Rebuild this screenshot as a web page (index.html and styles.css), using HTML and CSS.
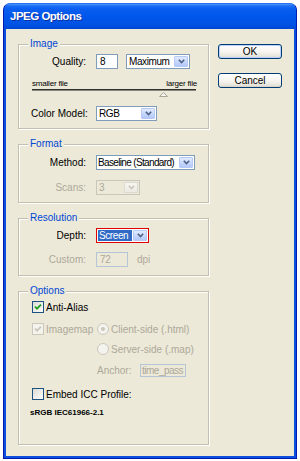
FILE: index.html
```html
<!DOCTYPE html>
<html>
<head>
<meta charset="utf-8">
<title>JPEG Options</title>
<link rel="stylesheet" href="styles.css">
</head>
<body>
<div class="window">
  <div class="titlebar"><span class="title">JPEG Options</span></div>
  <div class="client">
    <div class="groups">
      <section class="group g-image">
        <span class="legend">Image</span>
        <div class="row">
          <span class="lbl">Quality:</span>
          <div class="ctrls">
            <span class="field w-quality">8</span>
            <span class="select w-max"><span class="val">Maximum</span><span class="drop"><svg width="7" height="5" viewBox="0 0 7 5"><path d="M0.8 0.8 L3.5 3.6 L6.2 0.8" /></svg></span></span>
          </div>
        </div>
        <div class="slider">
          <div class="slider-labels"><span>smaller file</span><span>larger file</span></div>
          <div class="track"></div>
          <svg class="thumb" style="left:80%" width="9" height="5" viewBox="0 0 9 5"><path d="M0.5 4.5 L4.5 0.5 L8.5 4.5 Z" /></svg>
        </div>
        <div class="row">
          <span class="lbl">Color Model:</span>
          <div class="ctrls">
            <span class="select w-model"><span class="val">RGB</span><span class="drop"><svg width="7" height="5" viewBox="0 0 7 5"><path d="M0.8 0.8 L3.5 3.6 L6.2 0.8" /></svg></span></span>
          </div>
        </div>
      </section>

      <section class="group g-format">
        <span class="legend">Format</span>
        <div class="row">
          <span class="lbl">Method:</span>
          <div class="ctrls">
            <span class="select w-method"><span class="val tight">Baseline (Standard)</span><span class="drop"><svg width="7" height="5" viewBox="0 0 7 5"><path d="M0.8 0.8 L3.5 3.6 L6.2 0.8" /></svg></span></span>
          </div>
        </div>
        <div class="row row-gap">
          <span class="lbl dis">Scans:</span>
          <div class="ctrls">
            <span class="select disabled w-scans"><span class="val">3</span><span class="drop"><svg width="7" height="5" viewBox="0 0 7 5"><path d="M0.8 0.8 L3.5 3.6 L6.2 0.8" /></svg></span></span>
          </div>
        </div>
      </section>

      <section class="group g-res">
        <span class="legend">Resolution</span>
        <div class="row">
          <span class="lbl">Depth:</span>
          <div class="ctrls">
            <span class="select focused w-depth"><span class="val">Screen</span><span class="drop"><svg width="7" height="5" viewBox="0 0 7 5"><path d="M0.8 0.8 L3.5 3.6 L6.2 0.8" /></svg></span></span>
          </div>
        </div>
        <div class="row row-gap2">
          <span class="lbl dis">Custom:</span>
          <div class="ctrls">
            <span class="field disabled w-custom">72</span>
            <span class="dis">dpi</span>
          </div>
        </div>
      </section>

      <section class="group g-opt">
        <span class="legend">Options</span>
        <div class="orow o-aa">
          <span class="cb"><svg width="10" height="10" viewBox="0 0 10 10"><path class="chk" d="M2 4.6 L4 6.6 L8 2.6" /></svg></span>
          <span class="cbl">Anti-Alias</span>
        </div>
        <div class="orow o-map">
          <div class="ocol">
            <span class="cb disabled"><svg width="10" height="10" viewBox="0 0 10 10"><path class="chk" d="M2 4.6 L4 6.6 L8 2.6" /></svg></span>
            <span class="cbl dis">Imagemap</span>
          </div>
          <span class="rb disabled"><span class="dot"></span></span>
          <span class="rbl dis">Client-side (.html)</span>
        </div>
        <div class="orow o-srv">
          <div class="ocol"></div>
          <span class="rb disabled"></span>
          <span class="rbl dis">Server-side (.map)</span>
        </div>
        <div class="orow o-anchor">
          <div class="ocol"></div>
          <span class="dis anchor-lbl">Anchor:</span>
          <span class="field disabled w-anchor">time_pass</span>
        </div>
        <div class="orow o-icc">
          <span class="cb"></span>
          <span class="cbl">Embed ICC Profile:</span>
        </div>
        <div class="profile">sRGB IEC61966-2.1</div>
      </section>
    </div>

    <div class="buttons">
      <button class="btn default">OK</button>
      <button class="btn">Cancel</button>
    </div>
  </div>
</div>
</body>
</html>
```

FILE: styles.css
```css
html, body {
  margin: 0;
  padding: 0;
  background: #ffffff;
}

body {
  font-family: "Liberation Sans", Arial, sans-serif;
  font-size: 10px;
  color: #000;
}

.window {
  margin: 3px 0 0 3px;
  width: 294px;
  height: 456px;
  box-sizing: border-box;
  display: flex;
  flex-direction: column;
  background: #0b4fdc;
  border: 1px solid #0019b0;
  border-top: 1px solid #2a6ff0;
  border-radius: 7px 7px 0 0;
  padding: 0 2px 2px 2px;
}

.titlebar {
  margin: 0 -2px;
  height: 25px;
  border-radius: 6px 6px 0 0;
  background: linear-gradient(#4a98fb 0px, #1a6cf4 2px, #0a5ef0 5px, #0057eb 12px, #0054e6 18px, #0050e0 22px, #0046cf 25px);
  padding-left: 6px;
  display: flex;
  align-items: center;
}

.title {
  font-family: "Liberation Sans", Arial, sans-serif;
  font-weight: bold;
  font-size: 11.5px;
  letter-spacing: -0.5px;
  color: #fff;
  text-shadow: 1px 1px 0 #0a2fa0;
  line-height: 25px;
}

.client {
  flex: 1;
  background: #ece9d8;
  display: flex;
  align-items: flex-start;
  padding: 15px 0 0 12px;
  gap: 9px;
}

.groups {
  width: 191px;
  display: flex;
  flex-direction: column;
  gap: 15px;
}

.group {
  position: relative;
  border: 1px solid #c3bfae;
  box-shadow: inset 1px 1px 0 #fff, 1px 1px 0 #fff;
  padding: 0 12px;
}

.legend {
  position: absolute;
  top: -7px;
  left: 9px;
  padding: 0 2px;
  background: #ece9d8;
  color: #0046d5;
  line-height: 12px;
}

.g-image { padding-top: 9px; padding-bottom: 7px; }
.g-format { padding-top: 10px; padding-bottom: 7px; }
.g-res { padding-top: 9px; padding-bottom: 8px; }
.g-opt { padding-top: 9px; padding-bottom: 26px; }

.row {
  display: grid;
  grid-template-columns: 55px auto;
  column-gap: 10px;
  align-items: center;
  height: 15px;
}

.row-gap { margin-top: 10px; }
.row-gap2 { margin-top: 9px; }

.lbl {
  text-align: right;
  white-space: nowrap;
}

.dis { color: #aca899; }

.ctrls {
  display: flex;
  align-items: center;
  gap: 8px;
}

.w-custom + .dis { margin-left: 1px; }

.field {
  box-sizing: border-box;
  height: 15px;
  border: 1px solid #7f9db9;
  background: #fff;
  padding: 0 3px;
  line-height: 13px;
  white-space: nowrap;
  overflow: hidden;
  letter-spacing: -0.3px;
}

.field.disabled {
  border-color: #b5c5d6;
  background: #ece9d8;
  color: #aca899;
}

.w-quality { width: 22px; }
.w-custom { width: 32px; }
.w-anchor { width: 46px; height: 13px; line-height: 11px; padding: 0 1px; letter-spacing: -0.5px; }

.select {
  box-sizing: border-box;
  display: flex;
  height: 15px;
  border: 1px solid #7f9db9;
  background: #fff;
}

.select .val {
  flex: 1;
  padding-left: 2px;
  line-height: 13px;
  white-space: nowrap;
  overflow: hidden;
  letter-spacing: -0.4px;
}

.select .val.tight {
  padding-left: 1px;
  letter-spacing: -0.65px;
}

.select .drop {
  width: 14px;
  margin: 1px;
  box-sizing: border-box;
  border: 1px solid #b6c8f5;
  border-radius: 1px;
  background: linear-gradient(#e2ebfe, #c4d5fb 60%, #b4c8f7);
  display: flex;
  align-items: center;
  justify-content: center;
  flex-shrink: 0;
}

.select .drop svg path {
  fill: none;
  stroke: #4d6185;
  stroke-width: 1.6;
}

.select.disabled {
  border-color: #c9c7ba;
  background: #ece9d8;
}

.select.disabled .val { color: #aca899; }

.select.disabled .drop {
  border-color: #dcdad0;
  background: linear-gradient(#f7f6f1, #ebe9e0);
}

.select.disabled .drop svg path { stroke: #c9c7ba; }

.select.focused {
  border: 1px solid #e00000;
}

.select.focused .val {
  background: #316ac5;
  color: #fff;
  margin: 1px 0 1px 1px;
  line-height: 11px;
  padding-left: 1px;
}

.w-max { width: 64px; }
.w-model { width: 61px; }
.w-method { width: 99px; }
.w-scans { width: 44px; }
.w-depth { width: 53px; }

.slider {
  position: relative;
  height: 17px;
  margin: 10px 0 10px 1px;
}

.slider-labels {
  display: flex;
  justify-content: space-between;
  font-size: 8px;
  letter-spacing: -0.2px;
  line-height: 10px;
  height: 10px;
  margin-right: -1px;
}

.track {
  height: 1px;
  background: #303030;
  border-bottom: 1px solid #8a8878;
}

.thumb {
  position: absolute;
  top: 13px;
  margin-left: -4px;
}

.thumb path {
  fill: #f4f3ee;
  stroke: #a8a698;
  stroke-width: 1;
}

.orow {
  display: flex;
  align-items: center;
  height: 12px;
}

.ocol {
  width: 65px;
  display: flex;
  align-items: center;
  flex-shrink: 0;
}

.o-aa { margin-left: 1px; }
.o-map { margin-top: 10px; margin-left: 1px; }
.o-srv { margin-top: 8px; margin-left: 1px; }
.o-anchor { margin-top: 9px; margin-left: 1px; height: 13px; }
.o-icc { margin-top: 11px; margin-left: 1px; }

.cb {
  box-sizing: border-box;
  width: 12px;
  height: 12px;
  border: 1px solid #1c5180;
  background: linear-gradient(135deg, #dcdcd7, #fbfbf9);
  display: flex;
  align-items: center;
  justify-content: center;
  flex-shrink: 0;
}

.cb .chk {
  fill: none;
  stroke: #21a121;
  stroke-width: 1.9;
}

.cb.disabled {
  border-color: #cac8bb;
  background: #f4f3ee;
}

.cb.disabled .chk { stroke: #cac8bb; }

.cbl { margin-left: 2px; white-space: nowrap; }

.rb {
  box-sizing: border-box;
  width: 12px;
  height: 12px;
  border-radius: 50%;
  border: 1px solid #cac8bb;
  background: #f4f3ee;
  display: flex;
  align-items: center;
  justify-content: center;
  flex-shrink: 0;
}

.rb .dot {
  width: 4px;
  height: 4px;
  border-radius: 50%;
  background: #cac8bb;
}

.rbl { margin-left: 2px; white-space: nowrap; }

.anchor-lbl {
  width: 43px;
  flex-shrink: 0;
}

.profile {
  margin-top: 8px;
  font-size: 8px;
  font-weight: bold;
  line-height: 10px;
  margin-left: -1px;
}

.buttons {
  display: flex;
  flex-direction: column;
  gap: 14px;
}

.btn {
  width: 64px;
  height: 15px;
  padding: 0;
  border: 1px solid #003c74;
  border-radius: 3px;
  background: linear-gradient(#ffffff, #f6f5f0 50%, #e8e6dc 85%, #d6d0c5);
  font-family: "Liberation Sans", Arial, sans-serif;
  font-size: 10px;
  color: #000;
  line-height: 13px;
}

.btn.default {
  box-shadow: inset 0 0 0 1px #b9d1fa;
}
```
